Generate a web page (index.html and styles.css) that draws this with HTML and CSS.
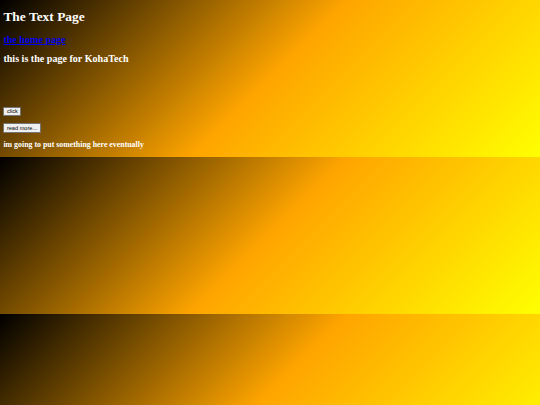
FILE: index.html
```html
<!DOCTYPE html>
<html>
<head>
<meta charset="utf-8">
<title>The Text Page</title>
<link rel="stylesheet" href="styles.css">
</head>
<body class="page">
<h1 class="title">The Text Page</h1>
<h2 class="sub"><a class="home-link" href="#">the home page</a></h2>
<h2 class="sub">this is the page for KohaTech</h2>
<div class="spacer"></div>
<p class="row"><button class="btn" type="button">click</button></p>
<p class="row"><button class="btn" type="button">read more...</button></p>
<h3 class="note">im going to put something here eventually</h3>
</body>
</html>
```

FILE: styles.css
```css
html {
  margin: 0;
  padding: 0;
}
.page {
  margin: 0;
  padding: 0.1px 3.4px 0;
  font-family: "Liberation Serif", "Times New Roman", serif;
  color: #ffffff;
  background: linear-gradient(135deg, #000000, #ffa500, #ffff00);
}
.title {
  font-size: 13.44px;
  font-weight: bold;
  margin: 9px 0;
}
.sub {
  font-size: 10.08px;
  font-weight: bold;
  margin: 8.4px 0;
}
.home-link {
  color: #0000ee;
  font-weight: bold;
}
.spacer {
  height: 27px;
}
.row {
  display: flex;
  margin: 7px 0;
}
.btn {
  font-family: "Liberation Sans", Arial, sans-serif;
  font-size: 5.6px;
  padding: 0.5px 2.5px;
  margin: 0;
  background: #efefef;
  color: #000000;
  border: 0.6px solid #767676;
  border-radius: 1px;
  line-height: 1.15;
}
.note {
  font-size: 7.86px;
  font-weight: bold;
  margin: 7.6px 0 7.4px;
}
```
